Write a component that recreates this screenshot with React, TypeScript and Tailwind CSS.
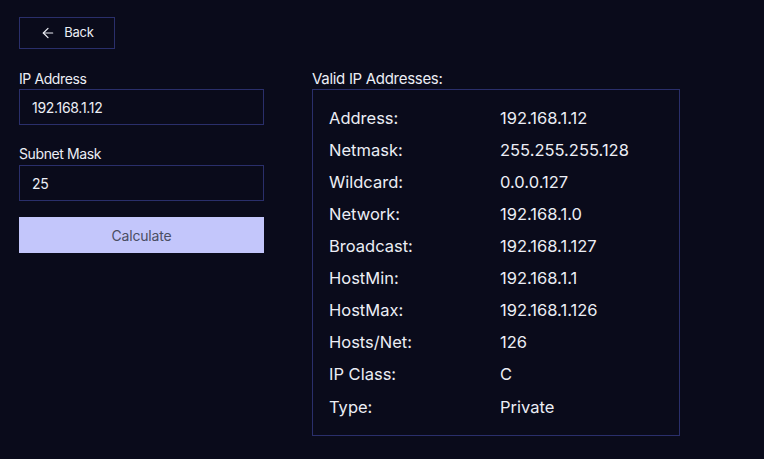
import { ArrowLeft } from "lucide-react";

const rows: [string, string][] = [
  ["Address:", "192.168.1.12"],
  ["Netmask:", "255.255.255.128"],
  ["Wildcard:", "0.0.0.127"],
  ["Network:", "192.168.1.0"],
  ["Broadcast:", "192.168.1.127"],
  ["HostMin:", "192.168.1.1"],
  ["HostMax:", "192.168.1.126"],
  ["Hosts/Net:", "126"],
  ["IP Class:", "C"],
  ["Type:", "Private"],
];

export default function App() {
  return (
    <div
      className="min-h-[459px] w-full bg-[#0a0b1b] px-[19px] pt-[17px] text-[#eceef5]"
      style={{ fontFamily: "Inter, 'Open Sans', sans-serif" }}
    >
      <button className="flex h-[32px] w-[96px] items-center justify-center gap-[8px] border border-[#2a2f6b] text-[13px] tracking-[-0.2px]">
        <ArrowLeft size={16} strokeWidth={1.8} />
        Back
      </button>
      <div className="mt-[21px] flex gap-[48px]">
        <div className="flex w-[245px] flex-col">
          <label className="text-[14px] leading-[17px] tracking-[-0.4px]">IP Address</label>
          <div className="mt-[2px] flex h-[36px] items-center border border-[#2a2f6b] px-[12px] text-[14px] tracking-[-0.3px]">
            192.168.1.12
          </div>
          <label className="mt-[20px] text-[14px] leading-[17px] tracking-[-0.4px]">Subnet Mask</label>
          <div className="mt-[3px] flex h-[36px] items-center border border-[#2a2f6b] px-[12px] text-[14px] tracking-[-0.3px]">
            25
          </div>
          <button className="mt-[16px] h-[36px] bg-[#c3c6fb] text-[14px] tracking-[-0.2px] text-[#4a4d63]">
            Calculate
          </button>
        </div>
        <div className="flex w-[368px] flex-col">
          <div className="text-[15px] leading-[17px] tracking-[-0.3px]">Valid IP Addresses:</div>
          <div className="mt-[2px] flex h-[347px] flex-col border border-[#2a2f6b] px-[16px] pt-[12px]">
            {rows.map(([k, v]) => (
              <div key={k} className="flex h-[32.1px] items-center text-[16.5px]">
                <span className="w-[171px]">{k}</span>
                <span>{v}</span>
              </div>
            ))}
          </div>
        </div>
      </div>
    </div>
  );
}
